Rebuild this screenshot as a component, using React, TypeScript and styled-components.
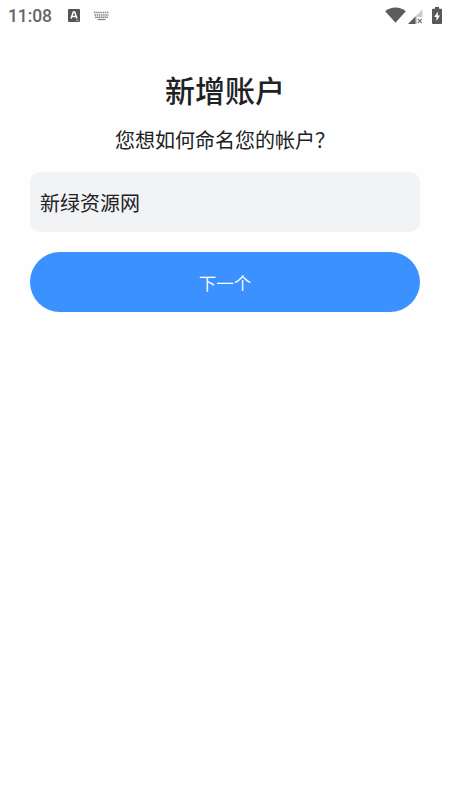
import React from 'react';
import styled, { createGlobalStyle } from 'styled-components';

const GlobalStyle = createGlobalStyle`
  * { box-sizing: border-box; }
  body {
    margin: 0;
    background: #fefefe;
    font-family: "Noto Sans CJK SC", sans-serif;
    color: #202123;
  }
`;

const Screen = styled.div`
  display: flex;
  flex-direction: column;
  min-height: 800px;
`;

const StatusBar = styled.header`
  display: flex;
  align-items: center;
  height: 32px;
  padding: 0 8px;
  color: #666;

  svg { display: block; flex: none; }
`;

const Clock = styled.time`
  width: 60px;
  font: 500 17.5px/32px Roboto, sans-serif;
  letter-spacing: -0.1px;
`;

const Notifications = styled.div`
  display: flex;
  align-items: center;
  gap: 13px;
  flex: 1;
  height: 100%;
  padding-bottom: 1px;
`;

const SystemIcons = styled.div`
  display: flex;
  align-items: center;
  height: 100%;
  padding-bottom: 2px;
`;

const Form = styled.main`
  display: flex;
  flex-direction: column;
  padding: 35px 30px 0;
`;

const Title = styled.h1`
  margin: 0;
  font-size: 30px;
  font-weight: 500;
  line-height: 44px;
  text-align: center;
`;

const Question = styled.label`
  margin-top: 14px;
  font-size: 20px;
  line-height: 30px;
  text-align: center;
`;

const NameInput = styled.input`
  height: 60px;
  margin-top: 17px;
  padding: 1px 10px 0;
  border: 0;
  border-radius: 10px;
  outline: 0;
  background: #f2f3f5;
  color: #202123;
  font: 400 20px "Noto Sans CJK SC", sans-serif;
`;

const NextButton = styled.button`
  height: 60px;
  margin-top: 20px;
  padding: 1px 0 0;
  border: 0;
  border-radius: 30px;
  background: #3b91ff;
  color: #fff;
  font: 350 17.5px "Noto Sans CJK SC", sans-serif;
`;

const LetterIcon = () => (
  <svg width="12" height="13" viewBox="0 0 12 13">
    <rect width="12" height="13" rx="1" fill="#555" />
    <path d="M3 9.5 5.3 3h1.4L9 9.5M4 7.5h4" fill="none" stroke="#fff" strokeWidth="1.5" />
    <path d="M8 11.3h3" stroke="#bbb" strokeWidth="0.8" />
  </svg>
);

const KeyboardIcon = () => (
  <svg width="17" height="10" viewBox="0 0 17 10" fill="none" stroke="#858585">
    <path d="M1 1.5h15M1.5 4h14" strokeWidth="1.5" strokeDasharray="1.5 .65" />
    <path d="M2 6.3h13" strokeWidth="1.4" strokeDasharray="1.5 .4" />
    <path d="M4.5 8.5h8" strokeWidth="1.3" />
  </svg>
);

const WifiIcon = () => (
  <svg width="21" height="16" viewBox="0 0 21 16" fill="#5c5c5c">
    <path d="M.2 4.2C6-.6 15-.6 20.8 4.2L10.5 15.8Z" />
  </svg>
);

const SignalIcon = () => (
  <svg width="15" height="15" viewBox="0 0 15 15">
    <path d="M0 15 14.5.3V8H9v7Z" fill="#cbcbcb" />
    <path d="M0 15 7.5 7.4V15Z" fill="#5c5c5c" />
    <path d="m9.8 10 4 4m0-4-4 4" stroke="#777" strokeWidth="1.1" />
  </svg>
);

const BatteryIcon = () => (
  <svg width="10" height="17" viewBox="0 0 10 17">
    <path d="M3 0h4v1.7h2q1 0 1 1V16q0 1-1 1H1q-1 0-1-1V2.7q0-1 1-1h2Z" fill="#585858" />
    <path d="M5.8 4.5 2.2 10h2.3v4L8 8.5H5.8Z" fill="#fff" />
  </svg>
);

const Spaced = styled.span<{ $left: number; $drop?: number }>`
  margin-left: ${({ $left }) => $left}px;
  padding-top: ${({ $drop = 0 }) => $drop}px;
`;

export default function App() {
  return (
    <>
      <GlobalStyle />
      <Screen>
        <StatusBar>
          <Clock>11:08</Clock>
          <Notifications>
            <LetterIcon />
            <KeyboardIcon />
          </Notifications>
          <SystemIcons>
            <WifiIcon />
            <Spaced $left={2} $drop={2}><SignalIcon /></Spaced>
            <Spaced $left={9}><BatteryIcon /></Spaced>
          </SystemIcons>
        </StatusBar>
        <Form>
          <Title>新增账户</Title>
          <Question htmlFor="account-name">您想如何命名您的帐户？</Question>
          <NameInput id="account-name" defaultValue="新绿资源网" />
          <NextButton type="button">下一个</NextButton>
        </Form>
      </Screen>
    </>
  );
}
